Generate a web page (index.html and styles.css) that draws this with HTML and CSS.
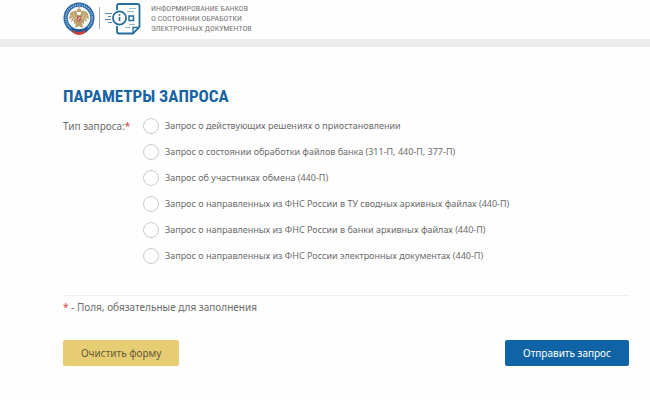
FILE: index.html
```html
<!DOCTYPE html>
<html lang="ru">
<head>
<meta charset="UTF-8">
<meta name="viewport" content="width=device-width, initial-scale=1">
<title>Параметры запроса</title>
<link rel="stylesheet" href="styles.css">
</head>
<body>
<header class="header">
<svg class="emblem" viewBox="0 0 32 34" aria-hidden="true">
<circle cx="16" cy="16" r="15.5" fill="#2b68a5"/>
<circle cx="16" cy="16" r="13.2" fill="none" stroke="#8fb2d3" stroke-width="1.8" stroke-dasharray="1.3 1"/>
<circle cx="16" cy="16" r="11" fill="#f5f8fa" stroke="#fff" stroke-width=".7"/>
<path d="M8 25 Q16 30 25 25 L24 30 Q16 34 9 30z" fill="#1c579a"/>
<path d="M9 28 Q16 32 23 28 L22 31 Q16 35 10 31z" fill="#c4433c"/>
<g fill="#bda16c">
<path d="M15 13 Q10 6 7 12 L6 17 L9 16 L8 20 L11 18 L11 22 L13 21 L12 26 L16 24 L20 26 L19 21 L21 22 L21 18 L24 20 L23 16 L26 17 L25 12 Q22 6 17 13z"/>
<path d="M14 7h4v3h-4zM15.5 5h1v3h-1z"/>
<circle cx="12.5" cy="10" r="1.5"/>
<circle cx="19.5" cy="10" r="1.5"/>
</g>
<path d="M8 13l3 5M10 11l3 6M24 13l-3 5M22 11l-3 6" stroke="#eee1c5" stroke-width=".7"/>
<path d="M14 14h4v4l-2 2l-2-2z" fill="#b9645c"/>
<path d="M15 18l2-3" stroke="#fff" stroke-width=".7"/>
</svg>
<span class="divider"></span>
<svg class="doc-icon" viewBox="0 0 36 34" fill="none" stroke="#256d9b" aria-hidden="true">
<path d="M12 8V3.500Q12 2 14 2H32.500Q34.500 2 34.500 4V25L28 31.500H14Q12 31.500 12 29.500V24" stroke-width="1.800"/>
<path d="M28 31V25.500H34" stroke-width="1.300"/>
<path d="M0 11.500H7M3 14.500H6M0 17.500H6M3 20.500H7" stroke-width=".8"/>
<circle cx="14.500" cy="16" r="6.600" fill="#fff" stroke-width="1.700"/>
<path d="M14.500 15V19M14.500 12.300V13.800" stroke-width="1.600"/>
<rect x="24" y="14" width="4.500" height="4.500" stroke-width="1.500"/>
<path d="M24 6.500H31M22 9.500H29M24 22.500H30M20 25.500H25" stroke-width=".8" stroke="#77a9c5"/>
</svg>
<div class="header-title">Информирование банков<br>о состоянии обработки<br>электронных документов</div>
</header>
<main class="content">
<h1>Параметры запроса</h1>
<form>
<div class="field" role="radiogroup" aria-labelledby="type-label">
<div class="field-label" id="type-label">Тип запроса:<span class="required">*</span></div>
<div class="options">
<label><input type="radio" name="type" value="1" required>Запрос о действующих решениях о приостановлении</label>
<label><input type="radio" name="type" value="2">Запрос о состоянии обработки файлов банка (311-П, 440-П, 377-П)</label>
<label><input type="radio" name="type" value="3">Запрос об участниках обмена (440-П)</label>
<label><input type="radio" name="type" value="4">Запрос о направленных из ФНС России в ТУ сводных архивных файлах (440-П)</label>
<label><input type="radio" name="type" value="5">Запрос о направленных из ФНС России в банки архивных файлах (440-П)</label>
<label><input type="radio" name="type" value="6">Запрос о направленных из ФНС России электронных документах (440-П)</label>
</div>
</div>
<p class="note"><span class="required">*</span> - Поля, обязательные для заполнения</p>
<div class="buttons">
<button type="reset" class="btn btn-clear">Очистить форму</button>
<button type="submit" class="btn btn-send">Отправить запрос</button>
</div>
</form>
</main>
</body>
</html>
```
FILE: styles.css
```css
* {
    box-sizing: border-box;
}
body {
    margin: 0;
    background: #fefefe;
    color: #6c6c6c;
    font-family: "Noto Sans", "Open Sans", sans-serif;
    font-size: 10px;
    line-height: 16px;
}
.header {
    display: flex;
    align-items: flex-start;
    padding: 2px 21px 3px 63px;
    border-bottom: 8px solid #ececec;
}
.emblem {
    width: 32px;
    height: 34px;
}
.divider {
    width: 1px;
    height: 22px;
    margin: 5px 5px 0 4px;
    background: #aaa;
}
.doc-icon {
    width: 36px;
    height: 34px;
}
.header-title {
    margin: 2px 0 0 10px;
    color: #777;
    font-family: "Liberation Sans Narrow", "Roboto Condensed", Roboto, sans-serif;
    font-size: 8px;
    line-height: 10px;
    text-transform: uppercase;
}
.content {
    padding: 37px 21px 24px 63px;
}
h1 {
    margin: 0 0 10px;
    color: #1763a3;
    font-family: "Liberation Sans Narrow", "Roboto Condensed", Roboto, sans-serif;
    font-size: 17px;
    font-weight: bold;
    line-height: 24px;
    text-transform: uppercase;
}
.field {
    display: flex;
    padding-bottom: 31px;
    border-bottom: 1px solid #f0f0f0;
}
.field-label {
    width: 80px;
}
.required {
    color: #d64545;
}
.options {
    display: grid;
    gap: 10px;
    flex: 1;
}
.options label {
    display: flex;
    align-items: center;
    font-size: 9px;
    cursor: pointer;
}
.options input {
    appearance: none;
    flex: none;
    width: 16px;
    height: 16px;
    margin: 0 6px 0 0;
    border: 1px solid #ccc;
    border-radius: 50%;
    background: #fff;
}
.options input:checked {
    border: 5px solid #1064a5;
}
.note {
    margin: 3px 0 25px;
}
.buttons {
    display: flex;
    justify-content: space-between;
}
.btn {
    height: 26px;
    padding: 0 18px;
    border: 0;
    border-radius: 2px;
    font: inherit;
    cursor: pointer;
}
.btn-clear {
    background: #e6cd74;
    color: #665a35;
}
.btn-send {
    background: #1064a5;
    color: #fff;
}
```
